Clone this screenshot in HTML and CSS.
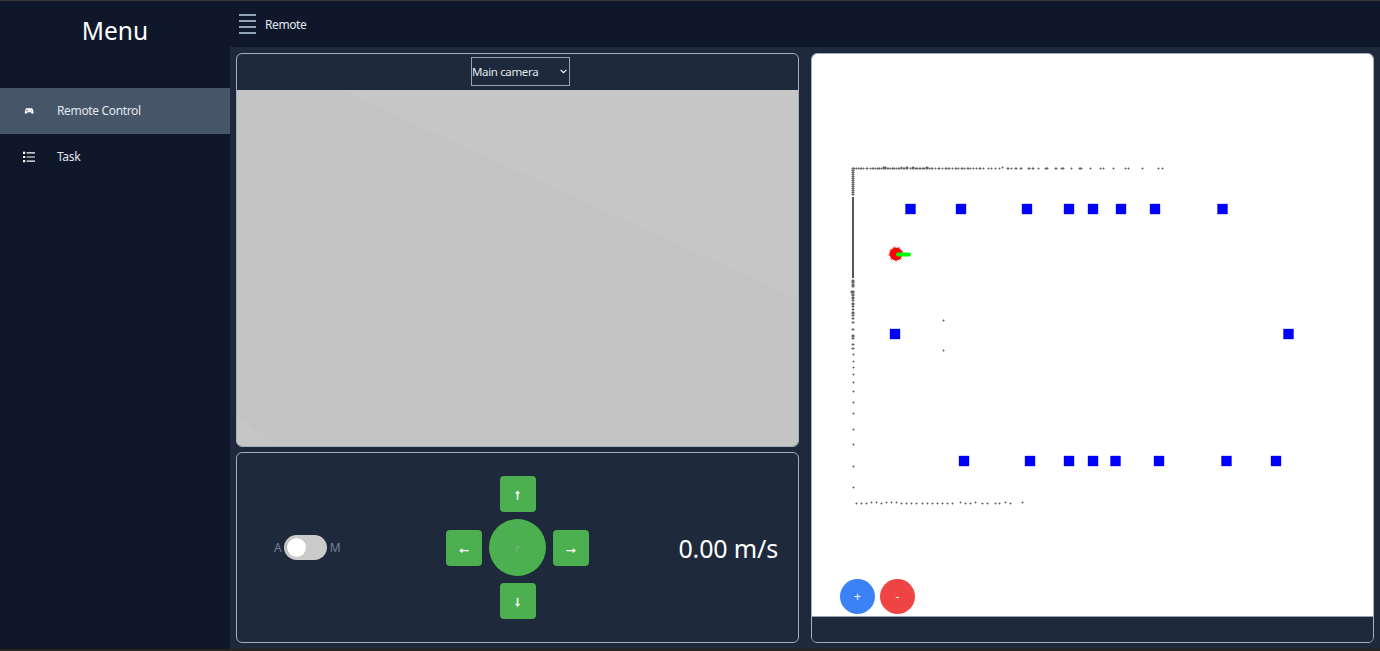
FILE: index.html
```html
<!DOCTYPE html>
<html lang="en">
<head>
<meta charset="utf-8">
<title>Remote</title>
<link rel="stylesheet" href="styles.css">
</head>
<body>
<div class="strip strip-top"></div>
<div class="app">
  <aside class="sidebar">
    <h1 class="brand">Menu</h1>
    <nav class="nav">
      <a class="nav-item active">
        <svg class="nav-icon" viewBox="-3 -3 30 30" width="12" height="12"><path fill="#fff" d="M6.500 5h11c2.600 0 4 1.700 4.600 4.200l1.300 5.600c.5 2.300-.7 4.200-2.700 4.200-1.500 0-2.500-.8-3.300-2l-1-1.600H8.600l-1 1.600c-.8 1.200-1.800 2-3.300 2-2 0-3.200-1.900-2.700-4.200l1.300-5.600C3.500 6.700 3.900 5 6.500 5z"/><path fill="#475569" d="M6.500 8h1.500v2h2v1.500H8v2H6.500v-2h-2V10h2zM16.500 9a1 1 0 1 1 0 2 1 1 0 0 1 0-2zM18.500 11.500a1 1 0 1 1 0 2 1 1 0 0 1 0-2z"/></svg>
        <span class="nav-label">Remote Control</span>
      </a>
      <a class="nav-item">
        <svg class="nav-icon" viewBox="0 0 12 12" width="12" height="12"><path fill="#fff" d="M0 .8h2.200V3H0zM0 4.900h2.200v2.200H0zM0 9h2.200v2.200H0zM3.600 1.300H12v1.200H3.600zM3.600 5.400H12v1.200H3.600zM3.600 9.500H12v1.200H3.600z"/></svg>
        <span class="nav-label">Task</span>
      </a>
    </nav>
  </aside>
  <div class="content">
    <header class="topbar">
      <span class="burger"><i></i><i></i><i></i><i></i></span>
      <span class="title">Remote</span>
    </header>
    <main class="main">
      <section class="left">
        <div class="panel video">
          <div class="video-head">
            <select class="camera"><option>Main camera</option></select>
          </div>
          <div class="video-body"></div>
        </div>
        <div class="panel control">
          <div class="mode">
            <span>A</span>
            <span class="switch"><i></i></span>
            <span>M</span>
          </div>
          <div class="pad">
            <button class="key up">↑</button>
            <button class="key lf">←</button>
            <button class="key mid">r</button>
            <button class="key rt">→</button>
            <button class="key dn">↓</button>
          </div>
          <div class="speed">0.00 m/s</div>
        </div>
      </section>
      <section class="panel map">
        <div class="map-canvas">
          <svg class="map-svg" viewBox="0 0 561 562" width="561" height="562">
            <g transform="translate(-812 -54)">
              <path class="wall" d="M853 197V278"/>
              <path class="pts" d="M854 168h1v1h-1zM856 168h1v1h-1zM858 168h1v1h-1zM860 168h2v1h-2zM863 168h1v1h-1zM866 168h2v1h-2zM870 168h1v1h-1zM872 168h2v1h-2zM875 168h1v1h-1zM877 168h3v1h-3zM881 168h1v1h-1zM883 167h3v2h-3zM887 168h2v1h-2zM890 168h1v1h-1zM892 168h3v1h-3zM896 168h1v1h-1zM898 168h2v1h-2zM901 167h1v2h-1zM903 168h2v1h-2zM906 167h2v2h-2zM910 168h1v1h-1zM912 167h2v2h-2zM915 168h3v1h-3zM919 168h2v1h-2zM922 168h3v1h-3zM926 167h2v2h-2zM929 168h1v1h-1zM931 168h2v1h-2zM935 168h1v1h-1zM938 168h2v1h-2zM942 168h1v1h-1zM945 168h2v1h-2zM948 168h2v1h-2zM952 168h1v1h-1zM955 168h2v1h-2zM958 168h1v1h-1zM961 168h2v1h-2zM964 168h1v1h-1zM967 168h2v1h-2zM970 168h1v1h-1zM973 168h1v1h-1zM976 168h1v1h-1zM979 168h2v1h-2zM983 168h1v1h-1zM988 168h1v1h-1zM991 168h1v1h-1zM995 168h1v1h-1zM999 168h1v1h-1zM1002 167h1v1h-1zM1007 168h2v1h-2zM1011 168h1v1h-1zM1015 168h2v1h-2zM1020 168h2v1h-2zM1028 168h2v1h-2zM1032 168h2v1h-2zM1038 168h1v1h-1zM1045 168h3v1h-3zM1055 168h2v1h-2zM1061 168h3v1h-3zM1071 168h1v1h-1zM1079 168h3v1h-3zM1090 168h1v1h-1zM1100 168h1v1h-1zM1103 168h1v1h-1zM1113 168h1v1h-1zM1125 168h1v1h-1zM1128 168h1v1h-1zM1142 168h1v1h-1zM1158 168h1v1h-1zM1162 168h1v1h-1z
              M852 168h2v1h-2zM852 170h2v1h-2zM852 172h2v1h-2zM852 174h2v1h-2zM852 176h2v1h-2zM852 178h2v1h-2zM852 180h2v1h-2zM852 182h2v1h-2zM852 184h2v1h-2zM852 186h2v1h-2zM852 188h2v1h-2zM852 190h2v1h-2zM852 192h2v1h-2zM852 194h2v1h-2zM852 280h2v3h-2zM852 284h2v3h-2zM851 291h3v2h-3zM852 294h2v2h-2zM852 297h2v2h-2zM852 300h2v1h-2zM852 303h2v2h-2zM852 306h2v1h-2zM852 309h2v1h-2zM852 312h2v2h-2zM852 315h2v1h-2zM852 318h2v1h-2z
              M852 322h2v1h-2zM852 329h2v1h-2zM852 335h2v2h-2zM852 338h2v1h-2zM852 344h2v1h-2zM852 348h2v1h-2zM853 354h1v1h-1zM853 361h1v1h-1zM853 367h1v1h-1zM853 374h1v1h-1zM853 382h1v1h-1zM853 391h1v1h-1zM853 402h1v1h-1zM853 413h1v1h-1zM853 429h1v1h-1zM853 444h1v1h-1zM853 466h1v1h-1zM853 487h1v1h-1z
              M943 320h1v1h-1zM943 350h1v1h-1z
              M856 503h1v1h-1zM861 503h1v1h-1zM866 503h1v1h-1zM871 502h1v1h-1zM876 502h1v1h-1zM881 503h1v1h-1zM886 502h1v1h-1zM891 502h1v1h-1zM896 502h1v1h-1zM901 503h1v1h-1zM906 503h1v1h-1zM911 503h1v1h-1zM916 503h1v1h-1zM922 503h1v1h-1zM927 503h1v1h-1zM932 503h1v1h-1zM937 503h1v1h-1zM942 503h1v1h-1zM947 503h1v1h-1zM952 503h1v1h-1zM960 502h1v1h-1zM965 503h1v1h-1zM970 503h1v1h-1zM975 502h1v1h-1zM982 503h1v1h-1zM987 503h1v1h-1zM995 503h1v1h-1zM999 503h1v1h-1zM1005 502h1v1h-1zM1010 503h1v1h-1zM1022 502h1v1h-1z"/>
              <path class="blocks" d="M905.500 204h10v10h-10zM956 204h10v10h-10zM1022 204h10v10h-10zM1064 204h10v10h-10zM1088 204h10v10h-10zM1116 204h10v10h-10zM1150 204h10v10h-10zM1217.500 204h10v10h-10zM890 329h10v10h-10zM1283.500 329h10v10h-10zM959 456h10v10h-10zM1025 456h10v10h-10zM1064 456h10v10h-10zM1088 456h10v10h-10zM1110.500 456h10v10h-10zM1154 456h10v10h-10zM1221.500 456h10v10h-10zM1271 456h10v10h-10z"/>
              <circle class="robot" cx="896" cy="254" r="6.500"/>
              <circle class="robot-edge" cx="896" cy="254" r="7"/>
              <path class="heading" d="M898 254.500H909"/>
            </g>
          </svg>
          <div class="zoom">
            <button class="zoom-btn plus">+</button>
            <button class="zoom-btn minus">-</button>
          </div>
        </div>
        <div class="map-foot"></div>
      </section>
    </main>
  </div>
</div>
<div class="strip strip-bottom"></div>
</body>
</html>
```

FILE: styles.css
```css
* { box-sizing: border-box; }
html, body { height: 100%; }
body {
  margin: 0;
  display: flex;
  flex-direction: column;
  overflow: hidden;
  background: #0f172a;
  color: #fff;
  font-family: "Noto Sans", "Open Sans", sans-serif;
}
.strip { flex: none; }
.strip-top { height: 1px; background: #3b3b3b; }
.strip-bottom { height: 2px; background: #2a2421; }
.app { flex: 1; display: flex; min-height: 0; }

.sidebar { flex: none; width: 230px; background: #0f172a; }
.brand {
  margin: 0;
  height: 87px;
  padding-top: 13px;
  text-align: center;
  font-size: 24.500px;
  line-height: 34px;
  font-weight: 400;
}
.nav { display: flex; flex-direction: column; }
.nav-item {
  display: flex;
  align-items: center;
  height: 46px;
  padding-left: 23px;
  font-size: 12px;
  letter-spacing: -0.35px;
  color: #e2e8f0;
}
.nav-item.active { background: #475569; }
.nav-icon { flex: none; margin-right: 22px; }
.nav-label { margin-bottom: 2px; }

.content { flex: 1; min-width: 0; display: flex; flex-direction: column; background: #1e293b; }
.topbar {
  flex: none;
  height: 46px;
  display: flex;
  align-items: center;
  padding-left: 9px;
  background: #0f172a;
}
.burger { display: flex; flex-direction: column; gap: 4px; width: 17px; margin-right: 9px; }
.burger i { display: block; height: 2px; background: #94a3b8; }
.title { font-size: 12px; letter-spacing: -0.4px; color: #e2e8f0; }

.main {
  flex: 1;
  min-height: 0;
  display: grid;
  grid-template-columns: 563px 563px;
  gap: 12px;
  padding: 6px 6px 6px;
}
.left { display: flex; flex-direction: column; gap: 5px; min-height: 0; }
.panel {
  border: 1px solid #a3aebd;
  border-radius: 6px;
  background: #1e293b;
  overflow: hidden;
}

.video { height: 394px; display: flex; flex-direction: column; }
.video-head { flex: none; height: 36px; display: flex; justify-content: center; padding: 3px 0 0 6px; }
.camera {
  appearance: none;
  width: 99px;
  height: 29px;
  padding: 0;
  border: 1px solid #94a3b8;
  border-radius: 0;
  background: #1e293b url("data:image/svg+xml,%3Csvg xmlns='http://www.w3.org/2000/svg' width='7' height='5'%3E%3Cpath d='M.6.8l2.900 2.900L6.400.8' fill='none' stroke='%23fff' stroke-width='1.100'/%3E%3C/svg%3E") no-repeat right 2px center;
  color: #e2e8f0;
  font-family: inherit;
  font-size: 11.500px;
  letter-spacing: -0.35px;
}
.video-body {
  flex: 1;
  background:
    linear-gradient(40deg, #c6c6c6 3.700%, #c3c3c3 4%, transparent 4.200%),
    linear-gradient(24.500deg, #c4c4c4 65.500%, #c3c3c3 65.700%, #c6c6c6 65.900%);
}

.control {
  flex: 1;
  min-height: 0;
  display: grid;
  grid-template-columns: 1fr 143px 1fr;
  align-items: center;
}
.mode {
  display: flex;
  align-items: center;
  justify-self: start;
  margin-left: 37px;
  font-size: 12px;
  color: #718096;
}
.switch {
  position: relative;
  width: 43px;
  height: 25px;
  margin: 0 3px 0 2px;
  border-radius: 13px;
  background: #cbcbcb;
}
.switch i {
  position: absolute;
  left: 3px;
  top: 3px;
  width: 19px;
  height: 19px;
  border-radius: 50%;
  background: #fff;
  box-shadow: -1px 0 1px #b3b3b3;
}
.pad {
  display: grid;
  grid-template-columns: 36px 57px 36px;
  grid-template-rows: 36px 57px 36px;
  gap: 7px;
  align-items: center;
  justify-items: center;
}
.key {
  width: 36px;
  height: 36px;
  padding: 0;
  border: 0;
  border-radius: 4px;
  background: #4caf50;
  color: #fff;
  font-family: "Liberation Sans", sans-serif;
  font-size: 14px;
  font-weight: 700;
  -webkit-text-stroke: 0.6px #fff;
}
.up { grid-area: 1 / 2; }
.lf { grid-area: 2 / 1; }
.mid {
  grid-area: 2 / 2;
  width: 57px;
  height: 57px;
  border-radius: 50%;
  color: #7fb083;
  font-family: "Noto Sans", sans-serif;
  font-size: 11px;
  font-weight: 400;
  -webkit-text-stroke: 0;
}
.rt { grid-area: 2 / 3; }
.dn { grid-area: 3 / 2; }
.speed { justify-self: end; margin-right: 20px; font-size: 25px; line-height: 34px; letter-spacing: -0.15px; }

.map { display: flex; flex-direction: column; }
.map-canvas { position: relative; height: 562px; background: #fff; flex: none; }
.map-svg { display: block; filter: blur(0.5px); }
.wall { fill: none; stroke: #555; stroke-width: 2; }
.pts { fill: #666; stroke: #666; stroke-width: 1; }
.blocks { fill: #0000ff; stroke: rgba(0, 0, 255, 0.35); stroke-width: 1; }
.robot { fill: #ff0000; }
.robot-edge { fill: none; stroke: #ff0000; stroke-width: 0.800; stroke-dasharray: 2 3; }
.heading { fill: none; stroke: #00ff00; stroke-width: 4; stroke-linecap: round; }
.zoom { position: absolute; left: 28px; top: 525px; display: flex; gap: 5px; }
.zoom-btn {
  width: 35px;
  height: 35px;
  padding: 0;
  border: 0;
  border-radius: 50%;
  color: #fff;
  font-family: inherit;
  font-size: 12px;
}
.plus { background: #3b82f6; }
.minus { background: #ef4444; }
.map-foot { flex: 1; border-top: 1px solid #94a3b8; background: #1e293b; }
```
